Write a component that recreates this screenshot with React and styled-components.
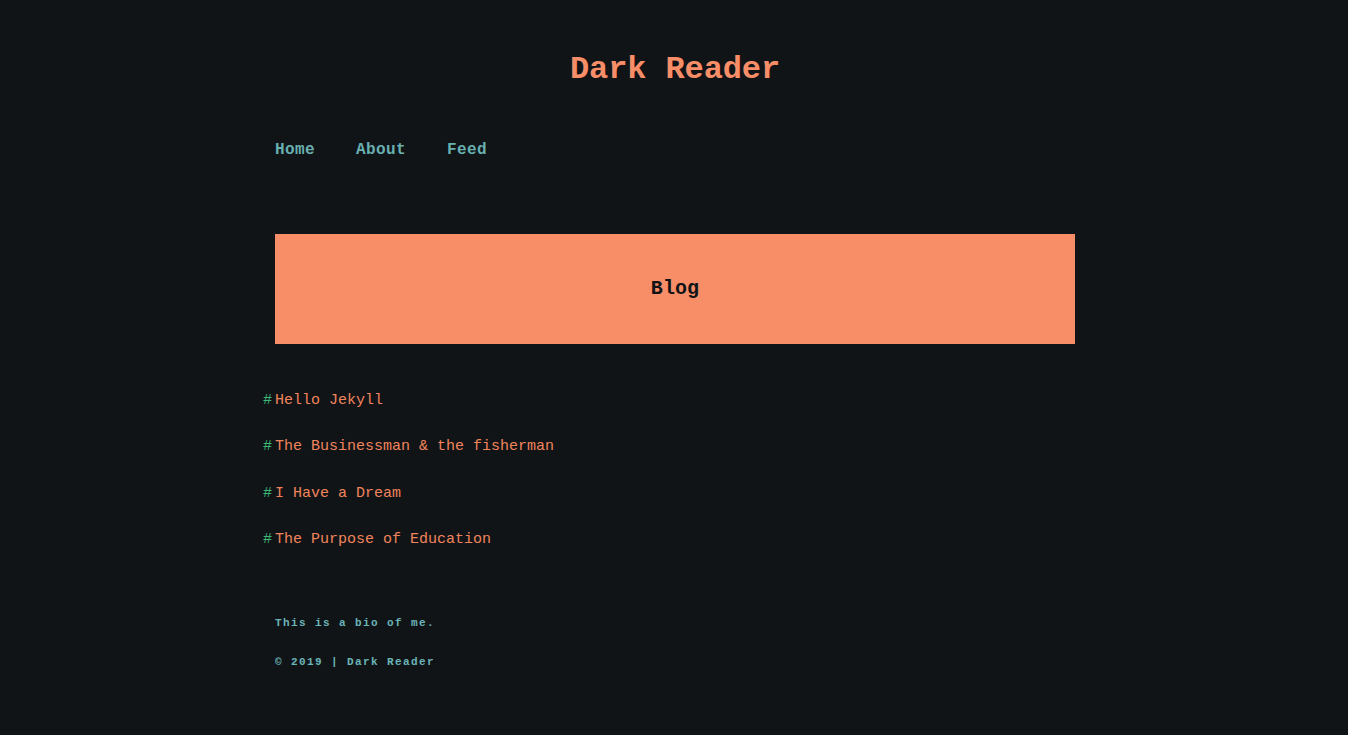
import React from "react";
import styled, { createGlobalStyle } from "styled-components";

const Global = createGlobalStyle`
  html, body { margin: 0; padding: 0; background: #111417; }
  body { font-family: "Liberation Mono", "Courier New", monospace; }
`;

const Page = styled.div`
  min-height: 735px;
  background: #111417;
  padding: 50px 0 60px 2px;
  box-sizing: border-box;
`;

const Container = styled.div`
  width: 800px;
  margin: 0 auto;
`;

const Title = styled.h1`
  margin: 0;
  text-align: center;
  font-size: 32px;
  line-height: 40px;
  font-weight: 700;
  letter-spacing: -0.1px;
  color: #f88e68;
`;

const Nav = styled.nav`
  display: flex;
  gap: 41px;
  margin-top: 48px;
`;

const NavLink = styled.a`
  font-size: 16px;
  line-height: 24px;
  font-weight: 700;
  letter-spacing: 0.4px;
  color: #68b0b0;
  text-decoration: none;
`;

const Banner = styled.div`
  margin-top: 72px;
  height: 110px;
  background: #f88e68;
  display: flex;
  align-items: center;
  justify-content: center;
`;

const BannerTitle = styled.h2`
  margin: 0;
  font-size: 20px;
  line-height: 24px;
  font-weight: 700;
  letter-spacing: 0.1px;
  color: #111417;
`;

const PostList = styled.ul`
  list-style: none;
  margin: 47px 0 0;
  padding: 0;
  display: flex;
  flex-direction: column;
  gap: 26.3px;
`;

const PostItem = styled.li`
  position: relative;
  font-size: 15px;
  line-height: 20px;
  color: #f0845c;
  &::before {
    content: "#";
    position: absolute;
    left: -12px;
    color: #3cb878;
  }
`;

const PostLink = styled.a`
  color: inherit;
  text-decoration: none;
`;

const Footer = styled.footer`
  margin-top: 65px;
  display: flex;
  flex-direction: column;
  gap: 23px;
`;

const FooterLine = styled.p`
  margin: 0;
  font-size: 11px;
  line-height: 16px;
  font-weight: 700;
  letter-spacing: 1.4px;
  color: #6ab5b8;
`;

const posts = [
  "Hello Jekyll",
  "The Businessman & the fisherman",
  "I Have a Dream",
  "The Purpose of Education",
];

export default function App() {
  return (
    <Page>
      <Global />
      <Container>
        <Title>Dark Reader</Title>
        <Nav>
          <NavLink href="#">Home</NavLink>
          <NavLink href="#">About</NavLink>
          <NavLink href="#">Feed</NavLink>
        </Nav>
        <Banner>
          <BannerTitle>Blog</BannerTitle>
        </Banner>
        <PostList>
          {posts.map((p) => (
            <PostItem key={p}>
              <PostLink href="#">{p}</PostLink>
            </PostItem>
          ))}
        </PostList>
        <Footer>
          <FooterLine>This is a bio of me.</FooterLine>
          <FooterLine>© 2019 | Dark Reader</FooterLine>
        </Footer>
      </Container>
    </Page>
  );
}
